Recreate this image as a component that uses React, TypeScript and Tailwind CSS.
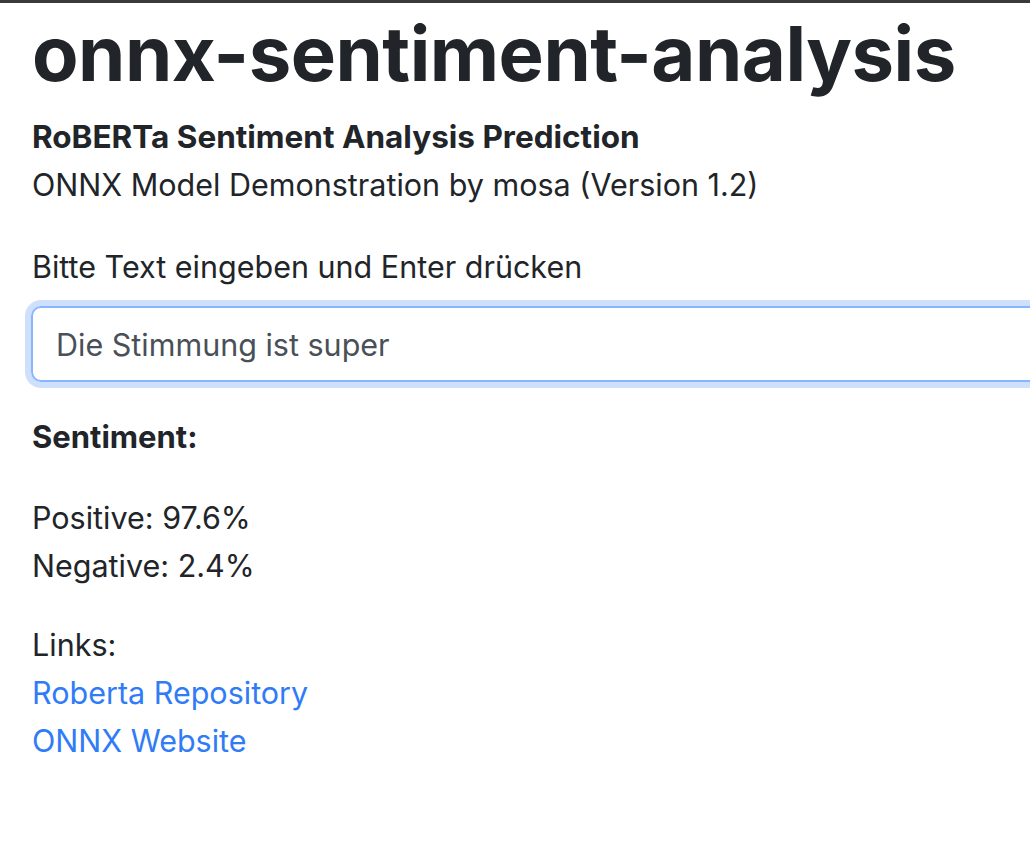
import { useState } from "react"

export default function App() {
    const [text, setText] = useState("Die Stimmung ist super")

    return (
        <div className="min-h-screen overflow-clip bg-white text-[#212529] font-['Inter','Liberation_Sans',sans-serif]">
            <div className="h-[3px] bg-[#3a3a3a]" />
            <div className="pl-8 pt-[5px]">
                <h1 className="text-[76px] leading-[91px] font-bold tracking-[-0.5px]">onnx-sentiment-analysis</h1>
                <p className="mt-[14px] text-[31.5px] leading-[48px] font-bold">RoBERTa Sentiment Analysis Prediction</p>
                <p className="text-[30.5px] leading-[48px]">ONNX Model Demonstration by mosa (Version 1.2)</p>

                <p className="mt-[34px] text-[30.5px] leading-[48px]">Bitte Text eingeben und Enter drücken</p>
                <div className="mt-[15px] -ml-px w-[1200px]">
                    <input
                        value={text}
                        onChange={(e) => setText(e.target.value)}
                        className="w-full h-[76px] rounded-[10px] border-2 border-[#86b7fe] ring-[6px] ring-[#cfe0fd] px-[23px] text-[30.5px] text-[#495057] caret-[#212529] outline-none"
                    />
                </div>

                <p className="mt-[31px] text-[31px] leading-[48px] font-bold">Sentiment:</p>
                <div className="mt-[33px] text-[30.5px] leading-[48px]">
                    <p>Positive: 97.6%</p>
                    <p>Negative: 2.4%</p>
                </div>
                <div className="mt-[31px] text-[30.5px] leading-[48px]">
                    <p>Links:</p>
                    <a href="#" className="block text-[#2f7cf6]">Roberta Repository</a>
                    <a href="#" className="block text-[#2f7cf6]">ONNX Website</a>
                </div>
            </div>
        </div>
    )
}
